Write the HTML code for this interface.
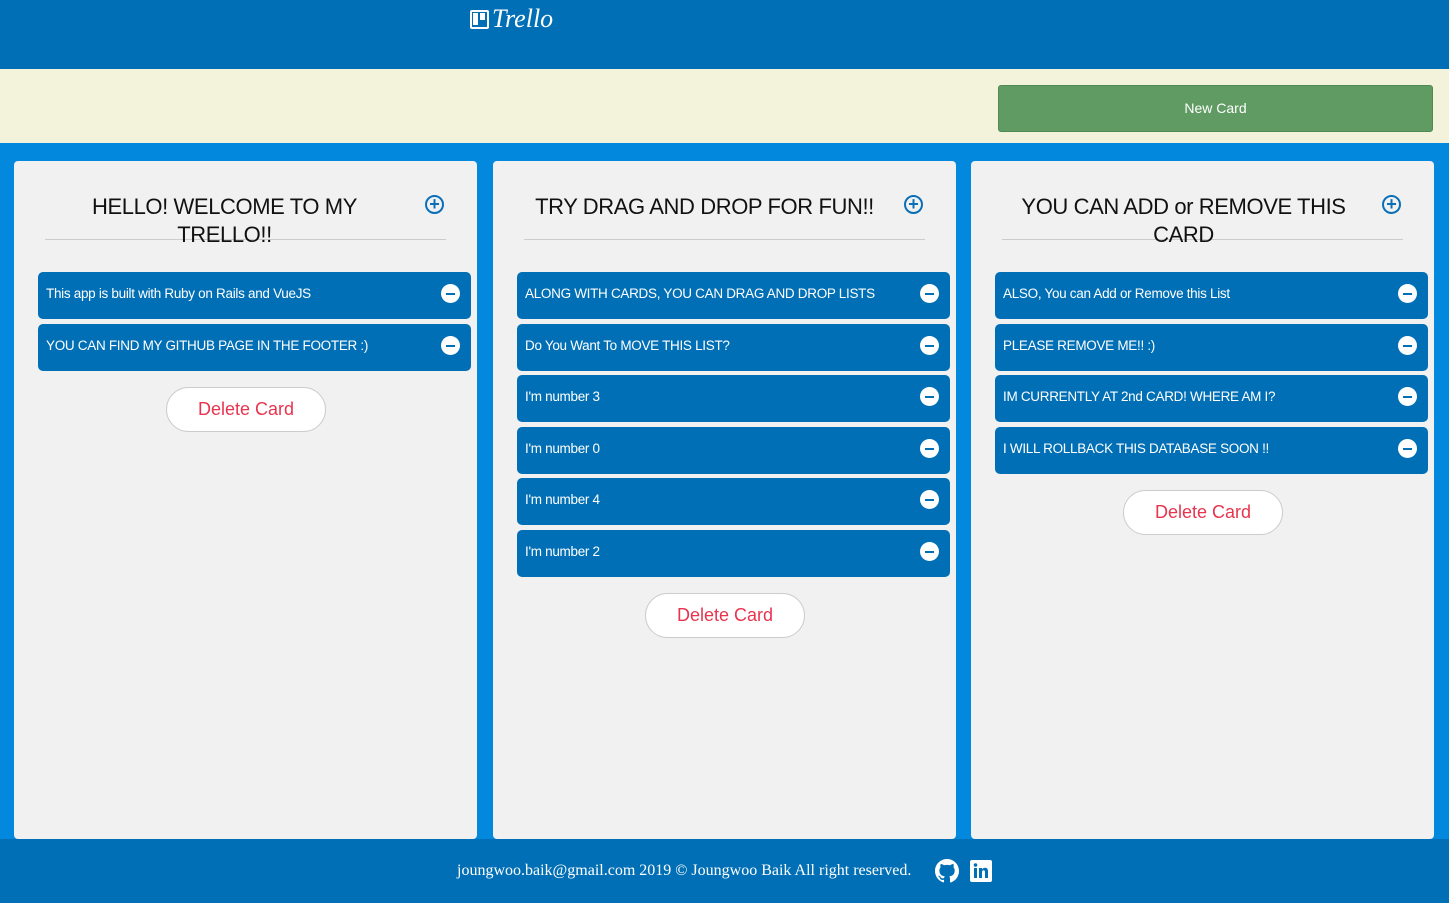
<!DOCTYPE html>
<html><head><style>
*{box-sizing:border-box;margin:0;padding:0}
body{width:1449px;height:903px;background:#0288dd;font-family:"Liberation Sans",sans-serif;position:relative;overflow:hidden}
.hdr{position:absolute;left:0;top:0;width:1449px;height:69px;background:#006fb5}
.logo{position:absolute;left:470px;top:4px;color:#fff;font-style:italic;font-size:26px;font-family:"Liberation Serif",serif;display:flex;align-items:center;gap:3px}
.lb{width:19px;height:19px;border:2.5px solid #fff;border-radius:2px;position:relative}
.lb:before{content:"";position:absolute;left:1px;top:1px;width:5px;height:12px;background:#fff}
.lb:after{content:"";position:absolute;left:8px;top:1px;width:5px;height:7px;background:#fff}
.band{position:absolute;left:0;top:69px;width:1449px;height:74px;background:#f3f2da}
.nc{position:absolute;left:998px;top:16px;width:435px;height:47px;background:#5f9b63;border:1px solid #4f8a53;border-radius:3px;color:#fff;font-size:14px;text-align:center;line-height:45px}
.col{position:absolute;top:161px;width:463px;height:678px;background:#f1f1f1;border-radius:4px}
.t{position:absolute;left:31px;width:401px;top:32px;text-align:center;font-size:22px;letter-spacing:-0.4px;line-height:28px;color:#111;border-bottom:1px solid #ccc;height:47px}
.t span{display:block}
.plus{position:absolute;left:411px;top:34px;width:19px;height:19px;border:2px solid #0b6fb8;border-radius:50%;color:#0b6fb8;font-size:18px;line-height:14px;text-align:center;font-weight:bold}
.card{position:absolute;left:24px;width:433px;height:47px;background:#006fb5;border-radius:5px;color:#fff;font-size:13.5px;letter-spacing:-0.3px;line-height:43px;padding-left:8px}
.card:after{content:"";position:absolute;right:11px;top:12px;width:19px;height:19px;border-radius:50%;background:#fff}
.card:before{content:"";position:absolute;right:16px;top:20.5px;width:9px;height:2px;background:#006fb5;z-index:1}
.del{position:absolute;left:152px;width:160px;height:45px;background:#fff;border:1px solid #ccc;border-radius:23px;color:#e8344e;font-size:18px;text-align:center;line-height:43px}
.ft{position:absolute;left:0;top:839px;width:1449px;height:64px;background:#006fb5;color:#fff;font-family:"Liberation Serif",serif;font-size:16px}
</style></head><body>
<div class="hdr"><div class="logo"><div class="lb"></div>Trello</div></div>
<div class="band"><div class="nc">New Card</div></div>

<div class="col" style="left:14px">
<div class="t"><span style="padding:0 60px 0 18px">HELLO! WELCOME TO MY TRELLO!!</span></div><div class="plus">+</div>
<div class="card" style="top:111px">This app is built with Ruby on Rails and VueJS</div>
<div class="card" style="top:163px">YOU CAN FIND MY GITHUB PAGE IN THE FOOTER :)</div>
<div class="del" style="top:226px">Delete Card</div>
</div>

<div class="col" style="left:493px">
<div class="t"><span style="padding:0 40px 0 0">TRY DRAG AND DROP FOR FUN!!</span></div><div class="plus">+</div>
<div class="card" style="top:111px">ALONG WITH CARDS, YOU CAN DRAG AND DROP LISTS</div>
<div class="card" style="top:163px">Do You Want To MOVE THIS LIST?</div>
<div class="card" style="top:214px">I'm number 3</div>
<div class="card" style="top:266px">I'm number 0</div>
<div class="card" style="top:317px">I'm number 4</div>
<div class="card" style="top:369px">I'm number 2</div>
<div class="del" style="top:432px">Delete Card</div>
</div>

<div class="col" style="left:971px">
<div class="t"><span style="padding:0 38px 0 0">YOU CAN ADD or REMOVE THIS CARD</span></div><div class="plus">+</div>
<div class="card" style="top:111px">ALSO, You can Add or Remove this List</div>
<div class="card" style="top:163px">PLEASE REMOVE ME!! :)</div>
<div class="card" style="top:214px">IM CURRENTLY AT 2nd CARD! WHERE AM I?</div>
<div class="card" style="top:266px">I WILL ROLLBACK THIS DATABASE SOON !!</div>
<div class="del" style="top:329px">Delete Card</div>
</div>

<div class="ft">
<div style="position:absolute;left:457px;top:23px">joungwoo.baik@gmail.com 2019 © Joungwoo Baik All right reserved.</div>
<svg style="position:absolute;left:935px;top:20px" width="24" height="24" viewBox="0 0 16 16"><path fill="#fff" d="M8 0C3.58 0 0 3.58 0 8c0 3.54 2.29 6.53 5.47 7.59.4.07.55-.17.55-.38v-1.34c-2.23.48-2.7-1.07-2.7-1.07-.36-.92-.89-1.17-.89-1.17-.73-.5.06-.49.06-.49.8.06 1.23.83 1.23.83.72 1.23 1.88.87 2.34.67.07-.52.28-.87.51-1.07-1.78-.2-3.64-.89-3.64-3.95 0-.87.31-1.59.82-2.15-.08-.2-.36-1.02.08-2.12 0 0 .67-.21 2.2.82a7.6 7.6 0 0 1 4 0c1.530-1.040 2.2-.82 2.2-.82.44 1.1.16 1.92.08 2.12.51.56.82 1.27.82 2.15 0 3.07-1.87 3.75-3.65 3.95.29.25.54.73.54 1.48v2.2c0 .21.15.46.55.38A8 8 0 0 0 16 8c0-4.42-3.58-8-8-8z"/></svg>
<svg style="position:absolute;left:970px;top:21px" width="22" height="22" viewBox="0 0 22 22"><rect width="22" height="22" rx="2" fill="#fff"/><rect x="4" y="8" width="3" height="10" fill="#006fb5"/><circle cx="5.5" cy="5" r="1.8" fill="#006fb5"/><path d="M9 8h3v1.5c.6-1 1.6-1.7 3-1.7 2.3 0 3 1.5 3 3.8V18h-3v-5.8c0-1.2-.4-1.9-1.4-1.9-1.1 0-1.6.8-1.6 1.9V18H9z" fill="#006fb5"/></svg>
</div>
</body></html>
